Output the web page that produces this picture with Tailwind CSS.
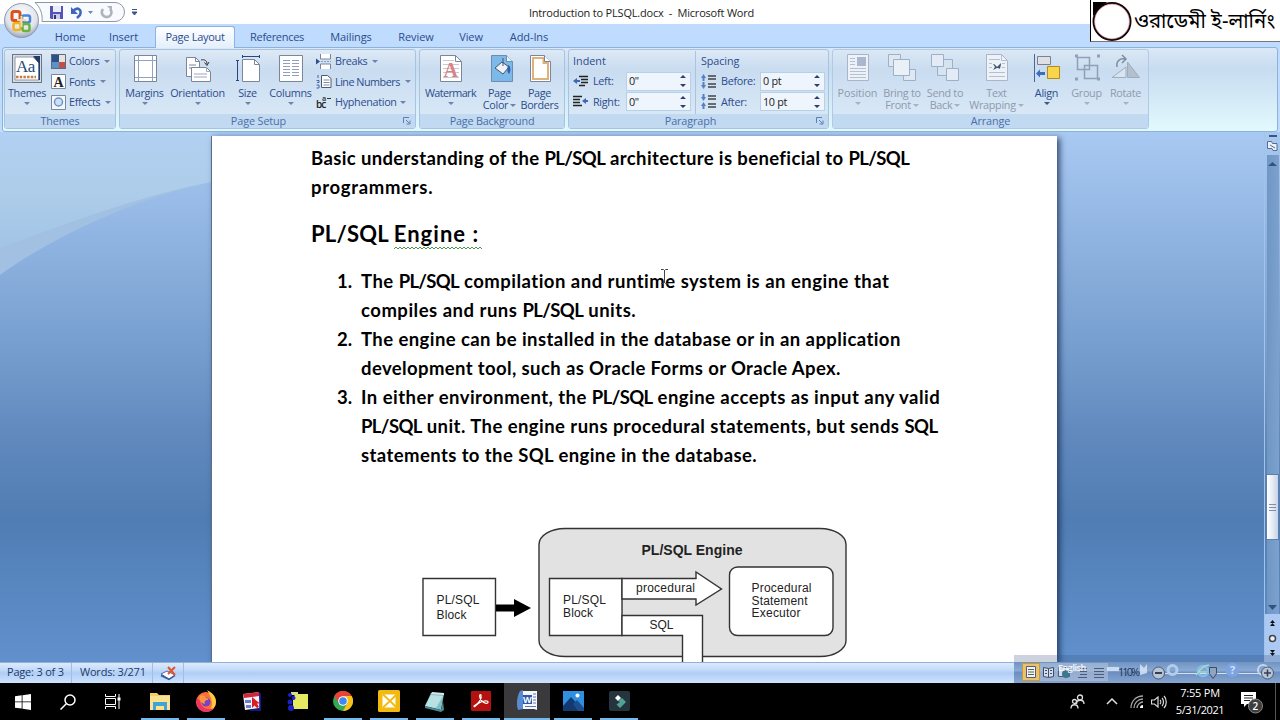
<!doctype html>
<html lang="en">
    <head>
        <meta charset="UTF-8" />
        <meta name="viewport" content="width=device-width, initial-scale=1.0" />
        <title>Introduction to PLSQL.docx - Microsoft Word</title>
        <script src="https://cdn.jsdelivr.net/npm/@tailwindcss/browser@4"></script>
    </head>
    <body
        class="relative flex h-[720px] w-[1280px] flex-col overflow-hidden bg-white font-['Open_Sans',sans-serif] text-[11px] leading-3 whitespace-nowrap text-[#2c4c8c]"
    >
        <!-- Title bar -->
        <header class="relative h-6 shrink-0 bg-white">
            <div class="flex h-full items-center justify-center pl-[3px] text-[11px] tracking-[-0.2px] text-[#222]">
                <span class="pt-0.5">Introduction to PLSQL.docx&nbsp; - &nbsp;Microsoft Word</span>
            </div>
            <svg class="absolute top-0 left-0 z-10" width="145" height="42" viewBox="0 0 145 42" fill="none">
                <defs>
                    <radialGradient id="orb" cx=".5" cy=".35" r=".65">
                        <stop offset="0" stop-color="#fff" />
                        <stop offset=".7" stop-color="#dfe3ea" />
                        <stop offset="1" stop-color="#9aa6ba" />
                    </radialGradient>
                </defs>
                <path d="M35 2.500H115a9.500 9.500 0 0 1 0 19H42C43 14 40 7 35 2.500Z" fill="#f8fafd" stroke="#8b98ab" />
                <circle cx="21.500" cy="20.500" r="17" fill="url(#orb)" stroke="#8e99ab" />
                <rect x="12" y="11.500" width="8" height="9" rx="2" stroke="#d9531e" stroke-width="3" />
                <rect x="22" y="15.500" width="8" height="7" rx="2" stroke="#4a86d8" stroke-width="2.500" />
                <rect x="13.500" y="23" width="7" height="7" rx="2" stroke="#f2b21c" stroke-width="2.500" />
                <rect x="22.500" y="24" width="7" height="7" rx="2" stroke="#6cb33e" stroke-width="2.500" />
                <path d="M17 20h9M21.500 16v11" stroke="#f7d9a0" stroke-width="2" />
                <!-- save -->
                <path d="M50 6h13v13H51l-1-1z" fill="#5552b8" />
                <path d="M53 6h8v6h-8z" fill="#e9ecfa" />
                <path d="M53 14h7v5h-7z" fill="#c9cbe8" />
                <path d="M54 15h2v4h-2z" fill="#333377" />
                <!-- undo, redo -->
                <path d="M73 11c5-5 9-1 7 4l-3 3" stroke="#3f66bd" stroke-width="2.500" />
                <path d="M71 7v7h7z" fill="#3f66bd" />
                <path d="M88 11h5l-2.500 3z" fill="#6e85b0" />
                <path d="M103 9c-3 4 0 8 4 8s6-5 3-8" stroke="#adb4bf" stroke-width="2.500" />
                <path d="M107 6h5v5z" fill="#adb4bf" />
                <path d="M132 9.500h5M132 12h5l-2.500 3z" fill="#3b5688" stroke="#3b5688" />
            </svg>
        </header>

        <!-- Channel logo over the window corner -->
        <div
            class="absolute top-0 right-0 z-20 flex h-[42px] w-[190px] items-center border-b border-l border-black border-b-[#777] bg-white text-black"
        >
            <svg width="42" height="42" viewBox="0 0 42 42">
                <path d="M2 2h14L2 16z" fill="#000" />
                <circle cx="21" cy="21.500" r="18.500" fill="#fff" stroke="#16060a" stroke-width="2" />
                <circle cx="21" cy="21.500" r="17.300" fill="none" stroke="#d88b95" stroke-width=".6" />
            </svg>
            <svg width="147" height="42">
                <text x="1" y="28" textLength="141" lengthAdjust="spacingAndGlyphs" class="font-['Noto_Sans_Bengali','Noto_Sans',sans-serif] text-[21px] font-normal">ওরাডেমী ই-লার্নিং</text>
            </svg>
        </div>

        <!-- Ribbon tabs -->
        <nav class="flex h-[23px] shrink-0 items-stretch bg-[#bfdbfd] pl-[44px] text-center leading-[25px] tracking-[-0.1px]">
            <a class="w-[52px]">Home</a>
            <a class="mr-1 w-[55px]">Insert</a>
            <a
                class="z-10 -mb-px mt-0.5 w-[80px] rounded-t-[3px] border border-b-0 border-[#8db2e3] bg-gradient-to-b from-white to-[#e3effb] leading-[19px] tracking-[-0.3px]"
                >Page Layout</a
            >
            <a class="w-[84px] tracking-[-0.3px]">References</a>
            <a class="w-[64px]">Mailings</a>
            <a class="w-[66px]">Review</a>
            <a class="w-[44px]">View</a>
            <a class="w-[72px]">Add-Ins</a>
        </nav>

        <!-- Ribbon -->
        <section class="h-[85px] shrink-0 bg-[#bfdbfd] px-0.5 text-[10.800px] tracking-[-0.3px]">
            <div
                class="flex h-full gap-[3px] rounded-[3px] border border-[#8db2d8] bg-gradient-to-b from-[#dbe8f7] via-[#c8dcf0] via-25% to-[#e2f9fe] px-px py-px text-center"
            >
                <div class="flex h-[80px] w-[112px] shrink-0 flex-col rounded-[3px] border border-[#a6c4e2] bg-gradient-to-b from-[#dde9f6] via-[#c9dcf0] via-25% to-[#dcebf8]">
                    <div class="flex h-[64px] pt-[3px] *:shrink-0">
                        <div class="flex w-[44px] flex-col items-center">
                            <svg class="mb-[3px]" width="32" height="31" viewBox="0 0 32 31">
                                <rect x="1.500" y="1.500" width="29" height="28" fill="#d5dce6" stroke="#6c7685" />
                                <path d="M4 4h18l6 6v17H4z" fill="#fff" stroke="#8e98a8" />
                                <path d="M22 3h7v24h-1.500V10z" fill="#223a6a" />
                                <text x="5" y="19" class="fill-[#26497c] font-['Liberation_Serif',serif] text-[17px]" textLength="19">Aa</text>
                                <path d="M5 24h20" stroke="#c77c45" stroke-width="2.500" stroke-dasharray="2.500 1.200" />
                            </svg>
                            Themes
                            <i class="mt-[3px] size-0 border-x-3 border-t-3 border-x-transparent border-t-[#6d83ab]"></i>
                        </div>
                        <div class="-mt-[2px] ml-[2px] flex flex-col text-left">
                            <div class="flex h-[20.500px] items-center gap-[3px]">
                                <svg width="15" height="15"><path d="M0 0h8v8H0z" fill="#2b5288" /><path d="M8 0h7v8H8z" fill="#e8e3da" /><path d="M0 8h8v7H0z" fill="#5d93c4" /><path d="M8 8h7v7H8z" fill="#c0504d" /><path d="M.5.5h14v14H.5z" fill="none" stroke="#5b6b85" /></svg>
                                Colors <i class="ml-0.5 size-0 border-x-3 border-t-3 border-x-transparent border-t-[#6d83ab]"></i>
                            </div>
                            <div class="flex h-[20.500px] items-center gap-[3px]">
                                <svg width="15" height="15"><path d="M.5.5h14v14H.5z" fill="#fff" stroke="#7888a0" /><text x="2.500" y="12.500" class="fill-[#222] font-['Liberation_Serif',serif] text-[14px] font-bold">A</text></svg>
                                Fonts <i class="ml-0.5 size-0 border-x-3 border-t-3 border-x-transparent border-t-[#6d83ab]"></i>
                            </div>
                            <div class="flex h-[20.500px] items-center gap-[3px]">
                                <svg width="15" height="15"><path d="M.5.5h14v14H.5z" fill="#f3f7fc" stroke="#7888a0" /><circle cx="7.500" cy="7" r="4" fill="#cfe0f5" stroke="#6c94cc" stroke-width="1.500" /></svg>
                                Effects <i class="ml-0.5 size-0 border-x-3 border-t-3 border-x-transparent border-t-[#6d83ab]"></i>
                            </div>
                        </div>
                    </div>
                    <div class="h-[14px] bg-[#c1d9f1] leading-[14px] tracking-[-0.1px] text-[#4a6ea8]">Themes</div>
                </div>

                <div class="flex h-[80px] w-[297px] shrink-0 flex-col rounded-[3px] border border-[#a6c4e2] bg-gradient-to-b from-[#dde9f6] via-[#c9dcf0] via-25% to-[#dcebf8]">
                    <div class="flex h-[64px] pt-[3px] *:shrink-0">
                        <div class="flex w-[49px] flex-col items-center">
                            <svg class="mb-[3px]" width="24" height="31"><path d="M1.500 2.500h22v26h-22z" fill="#fff" stroke="#7c8698" /><path d="M5.500 3v25M19.500 3v25M2 7.500h21M2 24.500h21" stroke="#8fa3c4" /></svg>
                            Margins
                            <i class="mt-[3px] size-0 border-x-3 border-t-3 border-x-transparent border-t-[#6d83ab]"></i>
                        </div>
                        <div class="flex w-[57px] flex-col items-center">
                            <svg class="mb-[3px]" width="28" height="31" fill="#fff" stroke="#7c8698"><path d="M2.500 4.500h9l4 4v15h-13z" /><path d="M11.500 4.500v4h4M5 12h7M5 15h4" fill="none" /><path d="M7.500 14.500h15l4 4v10h-19z" /><path d="M22.500 14.500v4h4M10 21h13M10 24h13" fill="none" stroke="#9aa8c0" /><path d="M17 7c4-1 6 1 6 4M20.500 9.500l2.500 3 2-3.500" fill="none" stroke="#333" /></svg>
                            Orientation
                            <i class="mt-[3px] size-0 border-x-3 border-t-3 border-x-transparent border-t-[#6d83ab]"></i>
                        </div>
                        <div class="flex w-[43px] flex-col items-center">
                            <svg class="mb-[3px]" width="26" height="31" fill="none"><path d="M7.500 6.500h12l5 5v17h-17z" fill="#fff" stroke="#7c8698" /><path d="M19.500 6.500v5h5" stroke="#7c8698" /><path d="M7 3.500h18M7.500 2v3M24.500 2v3M2.500 7v21M1 7.500h3M1 27.500h3" stroke="#2c4580" /></svg>
                            Size
                            <i class="mt-[3px] size-0 border-x-3 border-t-3 border-x-transparent border-t-[#6d83ab]"></i>
                        </div>
                        <div class="flex w-[43px] flex-col items-center">
                            <svg class="mb-[3px]" width="26" height="31"><path d="M1.500 2.500h23v26h-23z" fill="#fff" stroke="#7c8698" /><path d="M5 7.500h7M5 10.500h7M5 13.500h7M5 16.500h7M5 19.500h7M5 22.500h7M14 7.500h7M14 10.500h7M14 13.500h7M14 16.500h7M14 19.500h7M14 22.500h7" stroke="#90a0b8" /></svg>
                            Columns
                            <i class="mt-[3px] size-0 border-x-3 border-t-3 border-x-transparent border-t-[#6d83ab]"></i>
                        </div>
                        <div class="-mt-[2px] ml-[4px] flex flex-col text-left">
                            <div class="flex h-[20.500px] items-center gap-[3px]">
                                <svg width="16" height="15" fill="none"><path d="M0 4.500l4 3-4 3z" fill="#2c4c8c" /><path d="M4.500 0v5h10V0M4.500 15v-5h10v5" fill="#fff" stroke="#7c8698" /><path d="M5 7.500h10" stroke="#7fa0cc" stroke-dasharray="2 1" /></svg>
                                Breaks <i class="ml-0.5 size-0 border-x-3 border-t-3 border-x-transparent border-t-[#6d83ab]"></i>
                            </div>
                            <div class="flex h-[20.500px] items-center gap-[3px]">
                                <svg width="16" height="15" fill="none"><path d="M5.500 1.500h6l3.500 3v9H5.500z" fill="#fff" stroke="#4d5a70" /><path d="M7.500 6h6M7.500 8.500h6M7.500 11h6" stroke="#7f8da5" /><path d="M2 1v3M.5 6.500h2.500v2H1M.5 11h2.500v3H.5" stroke="#4466a8" /></svg>
                                <span class="tracking-[-0.5px]">Line Numbers</span> <i class="ml-0.5 size-0 border-x-3 border-t-3 border-x-transparent border-t-[#6d83ab]"></i>
                            </div>
                            <div class="flex h-[20.500px] items-center gap-[3px]">
                                <svg width="16" height="15"><text x="0" y="13" class="fill-[#222] text-[10px] font-semibold" textLength="10">bc</text><text x="6" y="6" class="fill-[#444] text-[7px] font-bold">a</text><path d="M11 3.500h4" stroke="#333" /></svg>
                                Hyphenation <i class="size-0 border-x-3 border-t-3 border-x-transparent border-t-[#6d83ab]"></i>
                            </div>
                        </div>
                    </div>
                    <div class="relative h-[14px] bg-[#c1d9f1] pr-[18px] leading-[14px] tracking-[-0.1px] text-[#4a6ea8]">
                        Page Setup
                        <svg class="absolute top-[3px] right-1" width="8" height="8" fill="none" stroke="#5f7fb0"><path d="M.5 6V.5H6M3 3l3.500 3.500M7 3.500V7H3.500" /></svg>
                    </div>
                </div>

                <div class="flex h-[80px] w-[146px] shrink-0 flex-col rounded-[3px] border border-[#a6c4e2] bg-gradient-to-b from-[#dde9f6] via-[#c9dcf0] via-25% to-[#dcebf8]">
                    <div class="flex h-[64px] pt-[3px] *:shrink-0">
                        <div class="flex w-[61px] flex-col items-center">
                            <svg class="mb-[3px]" width="24" height="31"><path d="M1.500 2.500h15l6 6v20h-21z" fill="#fff" stroke="#7c8698" /><path d="M16.500 2.500v6h6" fill="none" stroke="#7c8698" /><path d="M4 7.500h11M4 11.500h16M4 15.500h16M4 19.500h16M4 24.500h16" stroke="#c3cad6" /><text x="4.500" y="24" class="fill-[#dd7f86] font-['Liberation_Serif',serif] text-[20px] font-bold">A</text></svg>
                            <span class="tracking-[-0.6px]">Watermark</span>
                            <i class="mt-[3px] size-0 border-x-3 border-t-3 border-x-transparent border-t-[#6d83ab]"></i>
                        </div>
                        <div class="flex w-[37px] flex-col items-center">
                            <svg class="mb-[3px] ml-1" width="24" height="31"><path d="M1.500 2.500h15l6 6v20h-21z" fill="#7db9e8" stroke="#6c8cb0" /><path d="M16.500 2.500v6h6" fill="#e5f2fc" stroke="#6c8cb0" /><path d="M5 15l7-6 7 5-6 7z" fill="#eef2f6" stroke="#44546c" /><path d="M13 5v8" stroke="#44546c" /><path d="M18 12c3 1 3 6 1 9-2-2-2-5-1-9z" fill="#315fa8" /></svg>
                            <span>Page</span>
                            <span class="flex items-center gap-0.5">Color <i class="size-0 border-x-3 border-t-3 border-x-transparent border-t-[#6d83ab]"></i></span>
                        </div>
                        <div class="flex w-[43px] flex-col items-center">
                            <svg class="mb-[3px]" width="24" height="31"><path d="M2.500 2.500h14l6 6v20h-20z" fill="#fff" stroke="#7c8698" /><path d="M5 5h10.500v5H20v16H5z" fill="none" stroke="#dfb27a" stroke-width="2" /><path d="M16.500 2.500v6h6" fill="#fff" stroke="#7c8698" /></svg>
                            <span>Page</span><span>Borders</span>
                        </div>
                    </div>
                    <div class="h-[14px] bg-[#c1d9f1] leading-[14px] tracking-[-0.2px] text-[#4a6ea8]">Page Background</div>
                </div>

                <div class="flex h-[80px] w-[261px] shrink-0 flex-col rounded-[3px] border border-[#a6c4e2] bg-gradient-to-b from-[#dde9f6] via-[#c9dcf0] via-25% to-[#dcebf8]">
                    <div class="flex h-[64px] pt-px pl-1 text-left *:shrink-0">
                        <div class="flex w-[123px] flex-col border-r border-[#a9c3e0] *:shrink-0">
                            <div class="h-[20px] leading-[20px] tracking-normal">Indent</div>
                            <div class="flex h-[20.500px] items-center">
                                <svg class="mr-1" width="16" height="13"><path d="M6 1.500h9M8 4.500h7M8 7.500h7M6 10.500h6" stroke="#222" stroke-width="1.500" /><path d="M0 6l4-3v2h3v2H4v2z" fill="#3e68b5" /></svg>
                                <span class="w-[33px]">Left:</span>
                                <span class="flex h-[19px] w-[65px] items-center justify-between border border-[#b8cfe8] bg-[#eef5fd] pr-1 pl-0.5 text-[#222]">0" <svg width="6" height="12" fill="#2c4070"><path d="M0 3h6L3 0zM0 9h6l-3 3z" /></svg></span>
                            </div>
                            <div class="flex h-[20.500px] items-center">
                                <svg class="mr-1" width="16" height="13"><path d="M0 1.500h9M0 4.500h7M0 7.500h7M0 10.500h9" stroke="#222" stroke-width="1.500" /><path d="M9 6l4-3v2h2v2h-2v2z" fill="#3e68b5" /></svg>
                                <span class="w-[33px]">Right:</span>
                                <span class="flex h-[19px] w-[65px] items-center justify-between border border-[#b8cfe8] bg-[#eef5fd] pr-1 pl-0.5 text-[#222]">0" <svg width="6" height="12" fill="#2c4070"><path d="M0 3h6L3 0zM0 9h6l-3 3z" /></svg></span>
                            </div>
                        </div>
                        <div class="ml-[5px] flex flex-col *:shrink-0">
                            <div class="h-[20px] leading-[20px] tracking-[-0.1px]">Spacing</div>
                            <div class="flex h-[20.500px] items-center">
                                <svg class="mr-1" width="16" height="15"><path d="M7 2h8M7 5h8M7 10h8M7 13h8" stroke="#444" stroke-width="1.500" /><path d="M0 4l2.500-4L5 4H3.500v3h-2V4zM0 11l2.500 4L5 11H3.500V8h-2v3z" fill="#5580c4" /></svg>
                                <span class="w-[39px]">Before:</span>
                                <span class="flex h-[19px] w-[65px] items-center justify-between border border-[#b8cfe8] bg-[#eef5fd] pr-1 pl-0.5 text-[#222]">0 pt <svg width="6" height="12" fill="#2c4070"><path d="M0 3h6L3 0zM0 9h6l-3 3z" /></svg></span>
                            </div>
                            <div class="flex h-[20.500px] items-center">
                                <svg class="mr-1" width="16" height="15"><path d="M7 2h8M7 5h8M7 10h8M7 13h8" stroke="#444" stroke-width="1.500" /><path d="M0 3l2.500 4L5 3H3.500V0h-2v3zM0 12l2.500-4L5 12H3.500v3h-2v-3z" fill="#5580c4" /></svg>
                                <span class="w-[39px]">After:</span>
                                <span class="flex h-[19px] w-[65px] items-center justify-between border border-[#b8cfe8] bg-[#eef5fd] pr-1 pl-0.5 text-[#222]">10 pt <svg width="6" height="12" fill="#2c4070"><path d="M0 3h6L3 0zM0 9h6l-3 3z" /></svg></span>
                            </div>
                        </div>
                    </div>
                    <div class="relative h-[14px] bg-[#c1d9f1] pr-4 leading-[14px] tracking-[-0.1px] text-[#4a6ea8]">
                        Paragraph
                        <svg class="absolute top-[3px] right-1" width="8" height="8" fill="none" stroke="#5f7fb0"><path d="M.5 6V.5H6M3 3l3.500 3.500M7 3.500V7H3.500" /></svg>
                    </div>
                </div>

                <div class="flex h-[80px] w-[317px] shrink-0 flex-col rounded-[3px] border border-[#b0cae4] bg-gradient-to-b from-[#dbe8f5] via-[#c9dcf0] via-25% to-[#dcebf8]">
                    <div class="flex h-[64px] pt-[3px] text-[#8f9aab] *:shrink-0">
                        <div class="flex w-[49px] flex-col items-center">
                            <svg class="mb-[3px]" width="24" height="31"><path d="M1.500 1.500h21v26h-21z" fill="#edf2f8" stroke="#a9b5c8" /><path d="M11 4h9v9h-9z" fill="#a9b8cf" /><path d="M4 5.500h5M4 8.500h5M4 11.500h5M4 15.500h16M4 18.500h16M4 21.500h16M4 24.500h16" stroke="#b4bfd0" /></svg>
                            <span class="tracking-[-0.1px]">Position</span>
                            <i class="mt-[3px] size-0 border-x-3 border-t-3 border-x-transparent border-t-[#a5b1c4]"></i>
                        </div>
                        <div class="flex w-[40px] flex-col items-center">
                            <svg class="mb-[3px]" width="30" height="31" fill="#dde8f4" stroke="#9fb0c6"><path d="M1.500 1.500h12v12h-12zM16.500 16.500h12v11h-12z" /><path d="M6.500 6.500h16v16h-16z" fill="#e9f0f8" /></svg>
                            <span>Bring to</span>
                            <span class="flex items-center gap-0.5">Front <i class="size-0 border-x-3 border-t-3 border-x-transparent border-t-[#a5b1c4]"></i></span>
                        </div>
                        <div class="flex w-[46px] flex-col items-center">
                            <svg class="mb-[3px]" width="30" height="31" fill="#e3ecf6" stroke="#9fb0c6"><path d="M7.500 6.500h15v16h-15z" fill="#d6e3f1" /><path d="M1.500 1.500h12v12h-12zM16.500 15.500h12v12h-12z" /></svg>
                            <span>Send to</span>
                            <span class="flex items-center gap-0.5">Back <i class="size-0 border-x-3 border-t-3 border-x-transparent border-t-[#a5b1c4]"></i></span>
                        </div>
                        <div class="flex w-[57px] flex-col items-center">
                            <svg class="mb-[3px]" width="24" height="31"><path d="M1.500 1.500h15l6 6v20h-21z" fill="#edf2f8" stroke="#a9b5c8" /><path d="M16.500 1.500v6h6M4 6.500h11M4 10.500h3M17 10.500h3M4 14.500h3M17 14.500h3M4 19.500h16M4 23.500h16" fill="none" stroke="#b4bfd0" /><path d="M8 11c2 0 3 2 4 3l4-4c0 3-1 4-1 6-1-1-2-1-3-1l-4 2 2-3z" fill="#3f5470" /></svg>
                            <span>Text</span>
                            <span class="flex items-center gap-0.5">Wrapping <i class="size-0 border-x-3 border-t-3 border-x-transparent border-t-[#a5b1c4]"></i></span>
                        </div>
                        <div class="flex w-[43px] flex-col items-center text-[#2c4c8c]">
                            <svg class="mb-[3px]" width="28" height="31" fill="none"><path d="M1.500 1v28" stroke="#4a6494" /><path d="M4.500 3.500h13v8h-13z" fill="#dde1e6" stroke="#79828e" /><path d="M14.500 13.500h12v12h-12z" fill="#f8d54c" stroke="#b38a1c" /><path d="M3 20.500l4-4v2.500h5v3H7v2.500z" fill="#3c6bc0" /></svg>
                            Align
                            <i class="mt-[3px] size-0 border-x-3 border-t-3 border-x-transparent border-t-[#3b5688]"></i>
                        </div>
                        <div class="flex w-[37px] flex-col items-center">
                            <svg class="mb-[3px]" width="28" height="31" fill="none" stroke="#8fa0b8"><path d="M4.500 4.500h12v12h-12zM11.500 12.500h13v13h-13z" stroke-width="1.500" /><path d="M2 3h3M24 3h3M2 26h3M24 26h3" stroke-width="3" /></svg>
                            Group
                            <i class="mt-[3px] size-0 border-x-3 border-t-3 border-x-transparent border-t-[#a5b1c4]"></i>
                        </div>
                        <div class="flex w-[41px] flex-col items-center">
                            <svg class="mb-[3px]" width="30" height="31" fill="none"><path d="M1 24.500h14V14z" fill="#dbe4ee" stroke="#9fadc0" /><path d="M16.500 24.500V9l12 15.500z" fill="#b4bfcd" stroke="#9fadc0" /><path d="M6 14C5 8 9 5 14 6M11 2l4 4-4 4" stroke="#7f8da3" stroke-width="1.500" /></svg>
                            Rotate
                            <i class="mt-[3px] size-0 border-x-3 border-t-3 border-x-transparent border-t-[#a5b1c4]"></i>
                        </div>
                    </div>
                    <div class="h-[14px] bg-[#c1d9f1] leading-[14px] tracking-[-0.1px] text-[#4a6ea8]">Arrange</div>
                </div>
            </div>
        </section>

        <!-- Document area -->
        <main
            class="relative flex h-[530px] shrink-0 overflow-hidden bg-linear-[180deg,#a8c9f1_0%,#90b4e2_20%,#729bcb_44%,#628abf_56%,#507db3_73%,#6190cd_100%]"
        >
            <svg class="w-[211px] shrink-0" width="211" height="530" viewBox="0 0 211 530" fill="none">
                <defs>
                    <linearGradient id="sky" x1="0" y1="0" x2="0" y2="1">
                        <stop offset="0" stop-color="#b2d0f2" />
                        <stop offset=".5" stop-color="#aecdea" />
                        <stop offset="1" stop-color="#a3c4e6" />
                    </linearGradient>
                </defs>
                <path d="M0 0h211v50C140 66 60 100 0 143z" fill="#a1c0e2" />
                <path d="M0 0h211v50C140 64 70 90 0 116z" fill="url(#sky)" />
            </svg>
            <article
                class="mt-1 h-[526px] w-[846px] shrink-0 border-l border-[#5c6f88] bg-white pt-2 pl-[99px] font-['Lato',sans-serif] text-[18.500px] leading-[29px] font-bold text-black shadow-[3px_2px_6px_rgba(20,40,80,0.75)]"
            >
                <p>
                    <span class="tracking-[0.37px]">Basic understanding of the <span class="tracking-[-0.6px]">PL/SQL</span> architecture is beneficial to <span class="tracking-[-0.6px]">PL/SQL</span></span><br />
                    <span class="tracking-[0.7px]">programmers.</span>
                </p>
                <h1 class="mt-[15px] text-[22px] leading-[34px] tracking-[0.2px]">
                    PL/SQL
                    <span class="relative inline-block tracking-[1.050px]">Engine :<svg class="absolute bottom-[1px] left-0" width="88" height="4"><defs><pattern id="squiggle" width="4" height="4" patternUnits="userSpaceOnUse"><path d="M0 3l2-2 2 2" fill="none" stroke="#4c9a4c" /></pattern></defs><rect width="88" height="4" fill="url(#squiggle)" /></svg></span>
                </h1>
                <ol class="mt-[16px] ml-[26px] grid grid-cols-[24px_1fr]">
                    <li class="contents">
                        <span>1.</span>
                        <span><span class="tracking-[0.49px]">The <span class="tracking-[-0.7px]">PL/SQL</span> compilation and runtime system is an engine that</span><br /><span class="tracking-[0.5px]">compiles and runs <span class="tracking-[-0.6px]">PL/SQL</span> units.</span></span>
                    </li>
                    <li class="contents">
                        <span>2.</span>
                        <span><span class="tracking-[0.42px]">The engine can be installed in the database or in an application</span><br /><span class="tracking-[0.38px]">development tool, such as Oracle Forms or Oracle Apex.</span></span>
                    </li>
                    <li class="contents">
                        <span>3.</span>
                        <span><span class="tracking-[0.46px]">In either environment, the <span class="tracking-[-0.6px]">PL/SQL</span> engine accepts as input any valid</span><br /><span class="tracking-[0.44px]"><span class="tracking-[-0.6px]">PL/SQL</span> unit. The engine runs procedural statements, but sends <span class="tracking-[-0.5px]">SQL</span></span><br /><span class="tracking-[0.41px]">statements to the SQL engine in the database.</span></span>
                    </li>
                </ol>
                <svg
                    class="mt-[50px] ml-[109px] font-['Liberation_Sans',sans-serif] text-[12px] font-normal"
                    width="430" height="142" viewBox="420 520 430 142" fill="#fff" stroke="#333" stroke-width="1.400"
                >
                    <rect x="539" y="528.500" width="307" height="128" rx="26" ry="16" fill="#e2e2e2" />
                    <path d="M423 578.500h72.500v57H423zM549.500 578.500H622v57h-72.500z" />
                    <path d="M496 604.500h18V599l17 9-17 9v-5.500h-18z" fill="#000" stroke="none" />
                    <path d="M622 578.500h74V572l25.500 17L696 605v-6h-74z" />
                    <path d="M622 615.500h80.500V675H682.500V635.500H622z" />
                    <rect x="729.500" y="567" width="103.500" height="68.500" rx="8" />
                    <g fill="#222" stroke="none">
                        <text x="641.500" y="555" textLength="101" class="text-[14px] font-bold">PL/SQL Engine</text>
                        <text x="436.500" y="604" textLength="43">PL/SQL</text>
                        <text x="436.500" y="619" textLength="30">Block</text>
                        <text x="563" y="604" textLength="43">PL/SQL</text>
                        <text x="563" y="616.500" textLength="30">Block</text>
                        <text x="636" y="592" textLength="59">procedural</text>
                        <text x="649.500" y="629" textLength="24">SQL</text>
                        <text x="751.500" y="592" textLength="60">Procedural</text>
                        <text x="751.500" y="604.500" textLength="56">Statement</text>
                        <text x="751.500" y="617" textLength="49">Executor</text>
                    </g>
                </svg>
            </article>
            <!-- Scrollbar -->
            <aside class="ml-auto flex w-4 shrink-0 flex-col items-center border-l border-[#a3c4ea]">
                <svg class="shrink-0" width="15" height="23"><path d="M4 3h8v2H4z" fill="#3c5680" /><path d="M2.500 9.500h4l1 2h4.500v7H8l-1-2H2.500z" fill="#e9f0fa" stroke="#566d90" /><path d="M5 13l5 3" stroke="#566d90" /></svg>
                <div class="flex w-3 grow flex-col items-center bg-gradient-to-r from-[#6f97c5] to-[#7da1cd]">
                    <svg class="mt-1.5" width="9" height="5" fill="#34527e"><path d="M0 5l4.500-4L9 5z" /></svg>
                    <div class="mt-[308px] flex h-[66px] w-[13px] shrink-0 flex-col items-center justify-center gap-0.5 border border-[#5e7fae] bg-gradient-to-r from-white via-[#e6ecf5] to-[#c5d3e6]">
                        <i class="h-px w-[7px] bg-[#7f8fa8]"></i><i class="h-px w-[7px] bg-[#7f8fa8]"></i><i class="h-px w-[7px] bg-[#7f8fa8]"></i>
                    </div>
                    <svg class="mt-auto mb-1" width="9" height="5" fill="#34527e"><path d="M0 0h9L4.500 5z" /></svg>
                </div>
                <div class="flex h-[48px] w-full shrink-0 flex-col items-center justify-between bg-[#abc9f3] py-1.5">
                    <svg width="7" height="7" fill="#111"><path d="M1 3l2.500-3L6 3zM1 6l2.500-3L6 6z" /></svg>
                    <svg width="9" height="9"><circle cx="4.500" cy="4.500" r="3" fill="#eef" stroke="#444" stroke-width="1.500" /></svg>
                    <svg width="7" height="7" fill="#111"><path d="M1 1h5L3.500 4zM1 4h5L3.500 7z" /></svg>
                </div>
            </aside>
            <!-- Text cursor -->
            <svg class="absolute top-[137px] left-[660px]" width="9" height="16" fill="none" stroke="#444"><path d="M1 .5h2.500l1 1 1-1H8M4.500 1v13M1 14.500h2.500l1-1 1 1H8" /></svg>
        </main>

        <!-- Status bar -->
        <footer class="relative flex h-[21px] shrink-0 items-stretch border-t border-[#8fb0d8] bg-linear-[180deg,#dcebfc_0%,#c3dafa_35%,#b0cdf6_50%,#cfe4fd_100%] leading-[18px] tracking-[-0.2px] text-[#203a68]">
            <span class="w-[72px] border-r border-[#a0bfe6] pl-[7px]">Page: 3 of 3</span>
            <span class="w-[81px] border-r border-[#a0bfe6] pl-2">Words: 3/271</span>
            <span class="flex w-[31px] items-center justify-center border-r border-[#a0bfe6]">
                <svg width="17" height="15" fill="none"><path d="M1 8l6-3 8 4-6 4z" fill="#fff" stroke="#4a6ba5" /><path d="M1 9.500l8 4 6-4" stroke="#3558a0" stroke-width="1.500" /><path d="M8 1l7 8M15 1L8 8" stroke="#e2542c" stroke-width="2" /></svg>
            </span>
            <!-- View buttons and zoom, under the fading language bar -->
            <div class="absolute right-0 bottom-0 flex h-[28px] w-[266px] flex-col">
                <div class="h-[7px] bg-[#32507c]/25"></div>
                <svg class="bg-linear-[180deg,#6f93c2,#8aaad4_40%,#6d8fc0_50%,#86a5d0]" width="266" height="21" viewBox="1014 0 266 21" fill="none">
                    <path d="M1022 1h86v18h-86z" fill="#b5c5dc" fill-opacity=".55" />
                    <path d="M1022.500 1.500h17v17h-17z" fill="#e8c274" stroke="#c79a3c" />
                    <path d="M1026.500 4.500h9v11h-9z" fill="#f7f3e4" stroke="#54606f" /><path d="M1028 7.500h6M1028 10h6M1028 12.500h6" stroke="#54606f" />
                    <path d="M1043.500 5.500l5 1 5-1v9l-5 1-5-1zM1048.500 6.500v9" fill="#d5dded" stroke="#3e4d66" />
                    <path d="M1045 8.500h2M1045 11.500h2M1050 8.500h2M1050 11.500h2" stroke="#3e4d66" />
                    <path d="M1058.500 5.500h11v9h-11z" fill="#d5dded" stroke="#4d5c74" /><circle cx="1066" cy="12" r="4" fill="#3c7790" />
                    <path d="M1078 6.500h9M1080 9.500h7M1080 12.500h7M1078 15.500h9M1094 6.500h10M1094 9.500h10M1094 12.500h10M1094 15.500h10" stroke="#4d5c74" />
                    <text x="1058" y="8.500" textLength="28" class="fill-white/90 text-[9px] font-semibold">English</text>
                    <path d="M1107 5h12v4h-12zM1140 2l4 4 3-4v9l-7 2z" fill="#dce9f8" fill-opacity=".8" />
                    <text x="1118" y="14" textLength="22" class="fill-[#1d3358] text-[11px]">110%</text>
                    <path d="M1165 11.500h96" stroke="#d5e0ef" />
                    <circle cx="1158.500" cy="11" r="6" fill="#b9c5d6" stroke="#4c5b73" /><path d="M1155 11h7" stroke="#333f55" stroke-width="2" />
                    <circle cx="1172.500" cy="8" r="4.500" stroke="#b2cdec" stroke-width="3" />
                    <circle cx="1203" cy="9" r="5" stroke="#7dc0ee" stroke-width="2.500" /><path d="M1199 10h8M1196 13c4-6 9-10 13-10" stroke="#a8d8c8" stroke-width="1.500" />
                    <path d="M1209.500 5.500h7v6l-3.500 5-3.500-5z" fill="#90a4c0" stroke="#3e4d66" />
                    <circle cx="1232.500" cy="8" r="7" fill="#7da4e0" /><text x="1230" y="12" class="fill-[#cfe2fb] text-[11px] font-bold">?</text>
                    <circle cx="1263" cy="8" r="5" stroke="#c5d6eb" stroke-width="2" />
                    <circle cx="1267.500" cy="11" r="6" fill="#b9c5d6" stroke="#4c5b73" /><path d="M1264 11h7M1267.500 7.500v7" stroke="#333f55" stroke-width="1.500" />
                </svg>
            </div>
        </footer>

        <!-- Taskbar -->
        <footer class="flex h-[37px] shrink-0 items-stretch bg-black text-white">
            <div class="flex w-[45px] items-center justify-center">
                <svg width="16" height="16" fill="#fff"><path d="M0 2.300l6.700-1v6.200H0zM7.500 1.200L16 0v7.500H7.500zM0 8.300h6.700v6.300L0 13.700zM7.500 8.300H16V16l-8.500-1.200z" /></svg>
            </div>
            <div class="flex w-[45px] items-center justify-center">
                <svg width="16" height="16" fill="none" stroke="#fff" stroke-width="1.500"><circle cx="10" cy="6" r="5" /><path d="M6.500 9.500L.5 15.500" /></svg>
            </div>
            <div class="mr-px flex w-[46px] items-center justify-center">
                <svg width="16" height="15" fill="none" stroke="#fff"><path d="M.5 0v2.500h10V0M.5 15v-2.500h10V15M.5 4.500h10v6H.5zM14 0v15" /><path d="M14 3.500v3" stroke-width="3" /></svg>
            </div>
            <div class="flex w-[46px] flex-col items-center pt-[7px]">
                <svg width="22" height="22"><path d="M1 3h7l2 2h11v15H1z" fill="#f5cf62" /><path d="M1 6h20v14H1z" fill="#fbe28e" /><path d="M4 12h14v8h-3v-4H7v4H4z" fill="#3fa3d8" /></svg>
                <i class="mt-auto h-0.5 w-[38px] bg-[#76b9ed]"></i>
            </div>
            <div class="flex w-[46px] flex-col items-center pt-[7px]">
                <svg width="22" height="22"><circle cx="11" cy="12" r="10" fill="#ff7139" /><path d="M12 0c6 3 9 7 9 12a10 10 0 0 1-8 9.800C19 17 18 10 12 0z" fill="#ffcb3a" /><path d="M2 8C0 15 4 22 11 22c4 0 7-2 8-4-6 3-13 0-14-7z" fill="#ee3465" /><circle cx="11" cy="12" r="4.500" fill="#7644c4" /><path d="M5 6c3-1 5 0 6 2 2 0 3 1 2 2-3 0-4 2-3 4-4-1-6-4-5-8z" fill="#ff9640" /></svg>
                <i class="mt-auto h-0.5 w-[38px] bg-[#76b9ed]"></i>
            </div>
            <div class="flex w-[46px] flex-col items-center pt-[8px]">
                <svg width="20" height="20"><path d="M1 3l16-2 1 16-15 2z" fill="#f4f4fa" /><path d="M1 3l16-2v4L2 7z" fill="#d2273b" /><path d="M18 2v17H8" fill="none" stroke="#1c1cc0" stroke-width="1.500" /><path d="M3 9h6v3H3zM4 14h5v3H4z" fill="#6a7bd0" /><path d="M10 6v11l2.500-2.500L15 17l2-1-2-3.500h3z" fill="#d81f1f" /></svg>
            </div>
            <div class="flex w-[45px] flex-col items-center pt-[8px]">
                <svg width="22" height="20"><path d="M8 3h13v15H6V8z" fill="#e6ea62" /><path d="M4 1h7v3H4z" fill="#d8dc90" /><g fill="#1a22c8"><circle cx="3" cy="4" r="2" /><circle cx="6.500" cy="7" r="2" /><circle cx="3" cy="11" r="2.500" /><circle cx="4" cy="17" r="3" /></g></svg>
            </div>
            <div class="flex w-[46px] flex-col items-center pt-[8px]">
                <svg width="20" height="20"><circle cx="10" cy="10" r="10" fill="#34a853" /><path d="M1.300 5A10 10 0 0 1 18.700 5H10L6 12z" fill="#ea4335" /><path d="M18.700 5A10 10 0 0 1 10 20l4.500-8L10 5z" fill="#fbc116" /><circle cx="10" cy="10" r="4.800" fill="#fff" /><circle cx="10" cy="10" r="3.800" fill="#4285f4" /></svg>
                <i class="mt-auto h-0.5 w-[38px] bg-[#76b9ed]"></i>
            </div>
            <div class="flex w-[46px] flex-col items-center pt-[7px]">
                <svg width="22" height="22" fill="none"><rect width="22" height="22" rx="1.500" fill="#f2b90f" /><path d="M4.500 4.500h13v13h-13z" fill="#fff" /><path d="M5 4.500l7 6.500-7 6.500M18 5l-6 6 6 6" stroke="#f2b90f" stroke-width="1.800" /></svg>
                <i class="mt-auto h-0.5 w-[38px] bg-[#76b9ed]"></i>
            </div>
            <div class="flex w-[46px] flex-col items-center pt-[8px]">
                <svg width="22" height="21"><path d="M7 2l13 1-3 16L1 15z" fill="#7fc0c6" /><path d="M8 1l12 1v2L7 3z" fill="#dde6e6" /><path d="M7 4l12 1-7 12L1 15z" fill="#b9e0e2" /><path d="M1 15l16 4 2-9 1 9-3 2L1 17z" fill="#4b8d94" /></svg>
                <i class="mt-auto h-0.5 w-[38px] bg-[#76b9ed]"></i>
            </div>
            <div class="flex w-[46px] flex-col items-center pt-[8px]">
                <svg width="20" height="20" fill="none"><rect width="20" height="20" rx="1" fill="#b5120f" /><path d="M3 15c5-2 8-8 7-11-2-2-2 4 1 6 3 3 6 3 6 1s-6-1-9 1-5 5-5 3z" stroke="#fff" stroke-width="1.200" /></svg>
                <i class="mt-auto h-0.5 w-[38px] bg-[#76b9ed]"></i>
            </div>
            <div class="flex w-[46px] flex-col items-center bg-[#3a3a3c] pt-[7px]">
                <svg width="22" height="22"><path d="M4 1l3-1v19l-5 1C0 14 1 6 4 1z" fill="#5a8bd0" /><path d="M7 1h14v19l-3-1H7z" fill="#f4f7fc" /><path d="M7 5h9v9H7z" fill="#2d58a8" /><text x="7" y="13" class="fill-white text-[9px] font-bold">W</text><path d="M17 4h3M17 7h3M17 10h3M17 13h3M9 16.500h11" stroke="#5579b8" /></svg>
                <i class="mt-auto h-0.5 w-full bg-[#76b9ed]"></i>
            </div>
            <div class="flex w-[46px] flex-col items-center pt-[8px]">
                <svg width="21" height="20"><path d="M0 0h21v20H0z" fill="#2f8fe0" /><path d="M0 15l8-9 13 14H0z" fill="#123a70" /><path d="M10 13l4-4 7 8v3h-6z" fill="#1d4f8f" /><circle cx="14.500" cy="4.500" r="2" fill="#fff" /></svg>
                <i class="mt-auto h-0.5 w-[38px] bg-[#76b9ed]"></i>
            </div>
            <div class="flex w-[46px] flex-col items-center pt-[8px]">
                <svg width="21" height="20"><rect width="21" height="20" rx="2" fill="#26343e" /><path d="M6 7l3-3 3 3-3 3z" fill="#fff" /><path d="M9 10l4-3 4 4-6 6-3.500-3.500L11 11z" fill="#4ea395" /></svg>
                <i class="mt-auto h-0.5 w-[38px] bg-[#76b9ed]"></i>
            </div>
            <!-- Tray -->
            <div class="ml-auto flex items-center">
                <svg class="mr-[21px] ml-0" width="15" height="15" fill="none" stroke="#ddd" stroke-width="1.300"><circle cx="10" cy="3.500" r="2.500" /><path d="M6.500 10c0-5 7.500-5 7.500 0" /><circle cx="4.500" cy="7.500" r="2" /><path d="M1 14.500c0-5 7-5 7 0" /></svg>
                <svg class="mr-[12px]" width="12" height="7" fill="none" stroke="#ddd" stroke-width="1.500"><path d="M1 6l5-5 5 5" /></svg>
                <svg class="mr-[8px]" width="13" height="13" fill="none" stroke="#ddd" stroke-width="1.300"><path d="M1 13C1 6 6 1 13 1M4 13c0-5 4-9 9-9M7 13c0-3 3-6 6-6" opacity=".75" /><path d="M10 13c0-2 1-3 3-3v3z" fill="#fff" stroke="none" /></svg>
                <svg class="mr-[9px]" width="16" height="14" fill="none" stroke="#ddd" stroke-width="1.200"><path d="M.5 5h3l3.500-3v10L3.500 9h-3zM9 5c1 1 1 3 0 4M11 3c2 2 2 6 0 8M13 1c3 3 3 9 0 12" /></svg>
                <div class="-mt-0.5 w-[48px] text-center text-[11px] leading-[17px] tracking-[-0.2px]">
                    <span class="block">7:55 PM</span>
                    <span class="-mx-2 block tracking-[-0.4px]">5/31/2021</span>
                </div>
                <svg class="ml-[16px]" width="24" height="26" fill="none"><path d="M1 3h15v12H7l-3 3v-3H1z" fill="#fff" /><path d="M4 6.500h9M4 9h9M4 11.500h6" stroke="#222" /><circle cx="15.500" cy="17" r="7" fill="#3d3d3d" stroke="#888" /><text x="12.500" y="21" class="fill-white text-[10px] font-semibold">2</text></svg>
                <i class="mr-[4px] ml-[11px] h-full w-px bg-[#555]"></i>
            </div>
        </footer>
    </body>
</html>
